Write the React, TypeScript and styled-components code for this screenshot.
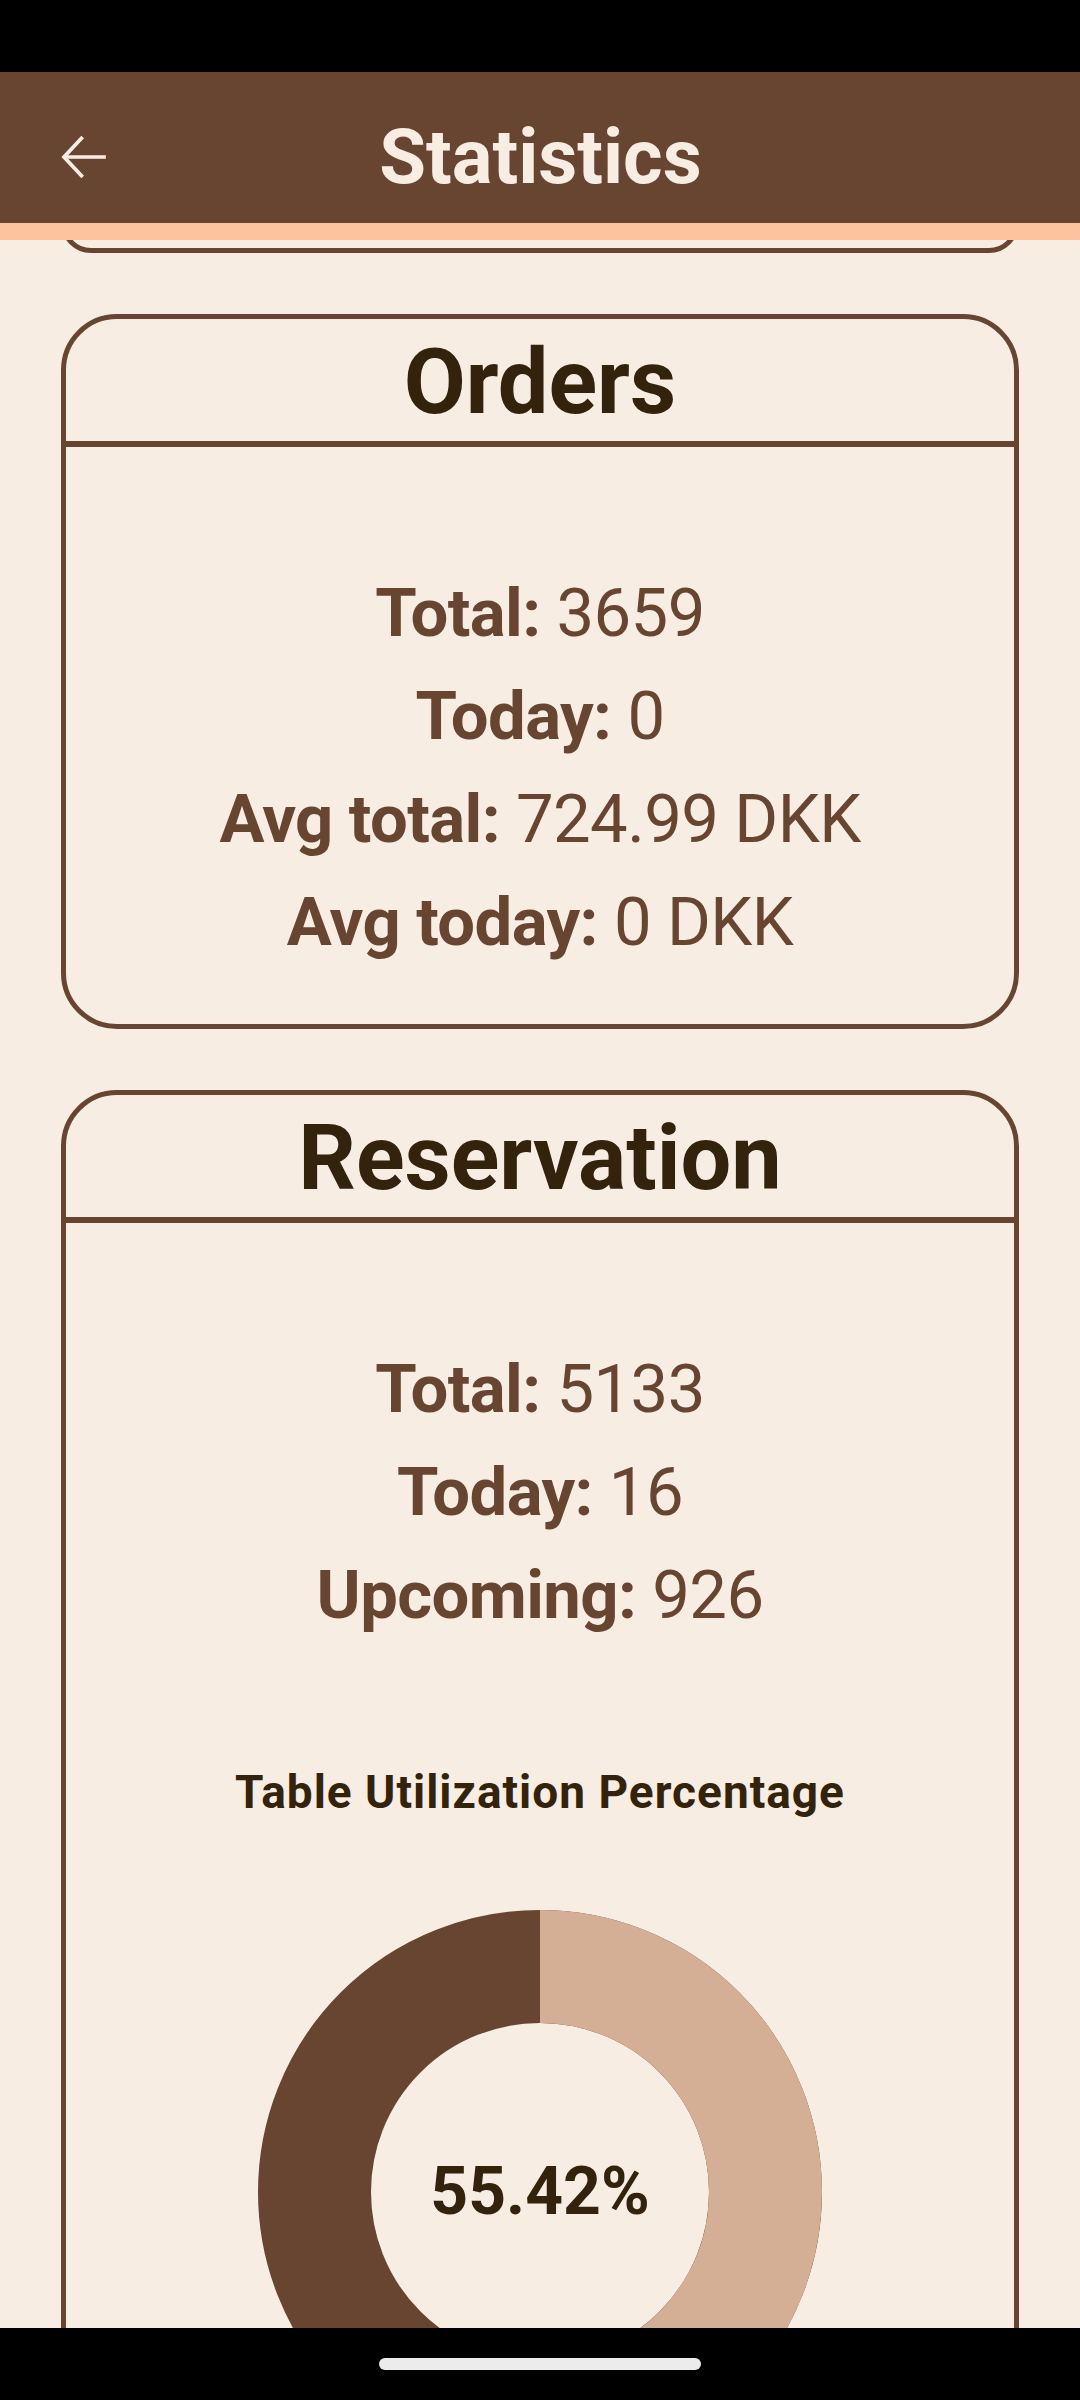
import React from "react";
import styled, { createGlobalStyle } from "styled-components";

const brown = "#684531";
const cream = "#F8EDE3";
const ink = "#33230C";

const GlobalStyle = createGlobalStyle`
  html, body {
    margin: 0;
    padding: 0;
    background: ${cream};
  }
  body {
    font-family: Roboto, "Noto Sans", sans-serif;
  }
`;

const Screen = styled.div`
  width: 1080px;
  height: 2400px;
  display: flex;
  flex-direction: column;
  background: ${cream};
  overflow: hidden;
`;

const StatusBar = styled.div`
  height: 72px;
  flex: none;
  background: #000;
`;

const Header = styled.header`
  height: 168px;
  flex: none;
  box-sizing: border-box;
  border-bottom: 17px solid #fdc39e;
  background: ${brown};
  display: flex;
  align-items: center;
  padding: 19px 61px 0 52px;
`;

const BackButton = styled.button`
  width: 64px;
  height: 64px;
  padding: 0;
  border: none;
  background: none;
  display: flex;
  align-items: center;
  justify-content: center;
  color: ${cream};
`;

const HeaderTitle = styled.h1`
  flex: 1;
  margin: 0 54px 0 0;
  text-align: center;
  font-size: 76px;
  font-weight: 700;
  color: ${cream};
  line-height: 1;
`;

const Main = styled.main`
  flex: 1;
  overflow: hidden;
  display: flex;
  flex-direction: column;
  gap: 61px;
  padding: 0 61px;
`;

const Card = styled.section`
  flex: none;
  border: 5px solid ${brown};
  border-radius: 56px;
  display: flex;
  flex-direction: column;
`;

const ScrolledCard = styled(Card)`
  height: 60px;
  margin-top: -47px;
  box-sizing: border-box;
`;

const CardTitle = styled.h2`
  height: 116px;
  margin: 0;
  padding-top: 6px;
  border-bottom: 6px solid ${brown};
  display: flex;
  align-items: center;
  justify-content: center;
  font-size: 90px;
  font-weight: 700;
  color: ${ink};
  line-height: 1;
`;

const Stats = styled.div<{ $bottom: number }>`
  padding: 115px 0 ${(p) => p.$bottom}px;
  display: flex;
  flex-direction: column;
  align-items: center;
`;

const StatLine = styled.p`
  margin: 0;
  font-size: 67px;
  letter-spacing: -0.6px;
  line-height: 103px;
  color: ${brown};
  white-space: nowrap;
`;

const Label = styled.b`
  font-weight: 700;
`;

const ChartTitle = styled.h3`
  margin: 0;
  font-size: 46px;
  letter-spacing: 1px;
  font-weight: 700;
  color: ${ink};
  text-align: center;
  line-height: 53px;
`;

const Chart = styled.div`
  margin: 91px auto 0;
  display: grid;
  place-items: center;
  width: 564px;
  height: 564px;
  & > * {
    grid-area: 1 / 1;
  }
`;

const Percent = styled.span`
  font-size: 66px;
  font-weight: 700;
  color: ${ink};
  line-height: 1;
`;

const NavBar = styled.div`
  height: 72px;
  flex: none;
  background: #000;
  display: flex;
  justify-content: center;
  padding-top: 30px;
  box-sizing: border-box;
`;

const NavPill = styled.div`
  width: 322px;
  height: 12px;
  border-radius: 6px;
  background: #ececec;
`;

const Stat = ({ label, value }: { label: string; value: string }) => (
  <StatLine>
    <Label>{label}:</Label> {value}
  </StatLine>
);

const Donut = ({ percent }: { percent: number }) => {
  const r = 225.5;
  const c = 2 * Math.PI * r;
  const light = ((100 - percent) / 100) * c;
  return (
    <Chart>
      <svg width="564" height="564" viewBox="0 0 564 564">
        <circle cx="282" cy="282" r={r} fill="none" stroke={brown} strokeWidth="113" />
        <circle
          cx="282"
          cy="282"
          r={r}
          fill="none"
          stroke="#d4af95"
          strokeWidth="113"
          strokeDasharray={`${light} ${c}`}
          transform="rotate(-90 282 282)"
        />
      </svg>
      <Percent>{percent.toFixed(2)}%</Percent>
    </Chart>
  );
};

export default function App() {
  return (
    <>
      <GlobalStyle />
      <Screen>
        <StatusBar />
        <Header>
          <BackButton aria-label="Back">
            <svg width="70" height="70" viewBox="0 0 24 24" fill="none" stroke="currentColor" strokeWidth="1.4" strokeLinecap="square">
              <path d="M19.5 12H5" />
              <path d="M11.5 4.5L4.5 12l7 7.5" strokeLinecap="butt" />
            </svg>
          </BackButton>
          <HeaderTitle>Statistics</HeaderTitle>
        </Header>
        <Main>
          <ScrolledCard />
          <Card>
            <CardTitle>Orders</CardTitle>
            <Stats $bottom={50}>
              <Stat label="Total" value="3659" />
              <Stat label="Today" value="0" />
              <Stat label="Avg total" value="724.99 DKK" />
              <Stat label="Avg today" value="0 DKK" />
            </Stats>
          </Card>
          <Card>
            <CardTitle>Reservation</CardTitle>
            <Stats $bottom={119}>
              <Stat label="Total" value="5133" />
              <Stat label="Today" value="16" />
              <Stat label="Upcoming" value="926" />
            </Stats>
            <ChartTitle>Table Utilization Percentage</ChartTitle>
            <Donut percent={55.42} />
          </Card>
        </Main>
        <NavBar>
          <NavPill />
        </NavBar>
      </Screen>
    </>
  );
}
